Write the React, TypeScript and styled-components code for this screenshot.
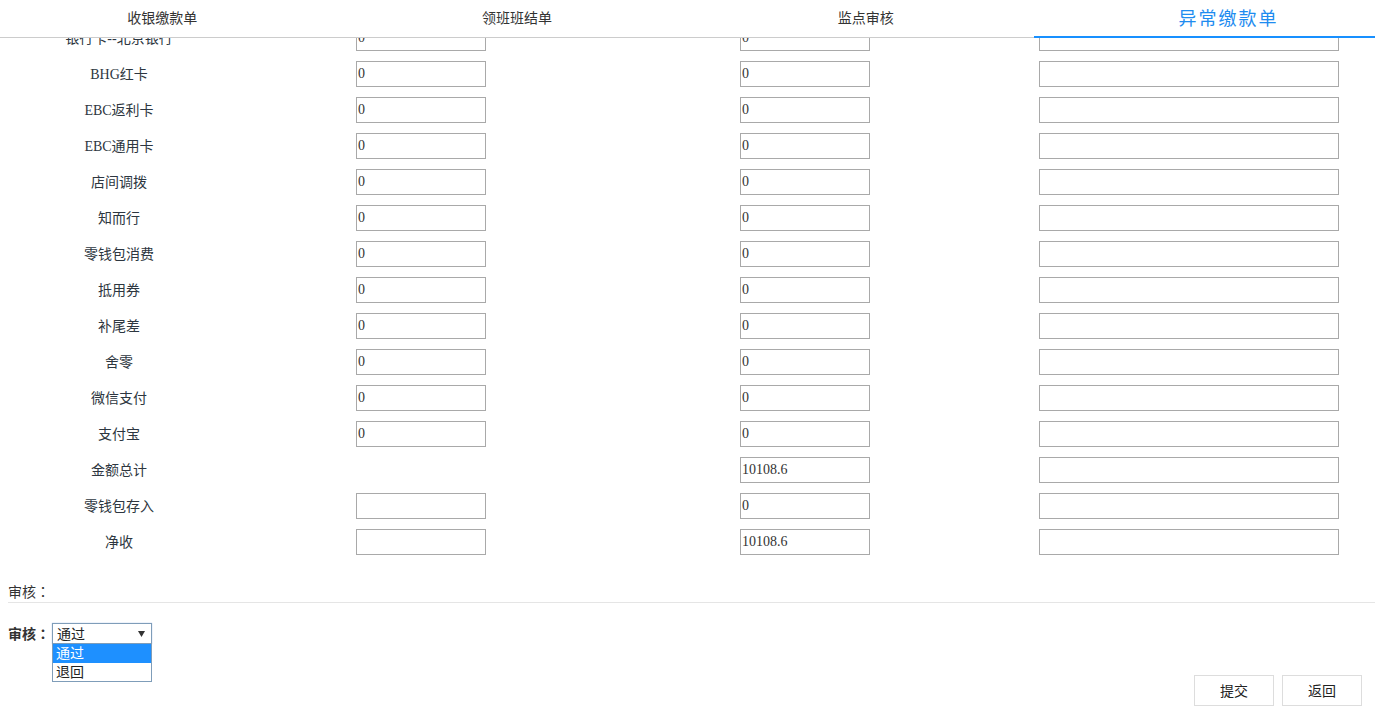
import { useState } from "react";
import styled, { createGlobalStyle } from "styled-components";

const GlobalStyle = createGlobalStyle`
  html, body {
    margin: 0;
    padding: 0;
    background: #fff;
    overflow: hidden;
  }
  body {
    font-family: "Liberation Serif", "Noto Sans CJK SC", serif;
    font-size: 14px;
    color: #333;
  }
`;

const TabBar = styled.div`
  position: fixed;
  top: 0;
  left: 0;
  right: 0;
  z-index: 10;
  display: grid;
  grid-template-columns: 1fr 1fr 1fr 341px;
  height: 38px;
  box-sizing: border-box;
  background: #fff;
  border-bottom: 1px solid #ccc;
`;

const Tab = styled.div<{ $active?: boolean }>`
  position: relative;
  display: flex;
  align-items: center;
  justify-content: center;
  font-family: "Noto Sans CJK SC", "Liberation Sans", sans-serif;
  font-size: ${(p) => (p.$active ? "18px" : "14px")};
  letter-spacing: ${(p) => (p.$active ? "2px" : "0")};
  color: ${(p) => (p.$active ? "#1e8cf0" : "#333")};
  cursor: pointer;

  &::after {
    content: "";
    display: ${(p) => (p.$active ? "block" : "none")};
    position: absolute;
    left: 0;
    right: 0;
    bottom: -1px;
    height: 2px;
    background: #1890ff;
  }
`;

const TabText = styled.span<{ $shift: number }>`
  margin-left: ${(p) => p.$shift * 2}px;
  margin-top: -3px;
`;

const Page = styled.div`
  padding-top: 20px;
`;

const Grid = styled.div`
  display: grid;
  grid-template-columns: 356px 384px 299px 1fr;
`;

const Row = styled.div`
  display: contents;
`;

const Cell = styled.div`
  height: 36px;
  display: flex;
  align-items: center;
`;

const LabelCell = styled(Cell)`
  justify-content: center;
  padding-right: 118px;
  padding-bottom: 2px;
  box-sizing: border-box;
  color: #2d3640;
`;

const Field = styled.input<{ $wide?: boolean }>`
  box-sizing: border-box;
  width: ${(p) => (p.$wide ? "300px" : "130px")};
  height: 26px;
  margin: 0;
  padding: 0 1px;
  border: 1px solid #a9a9a9;
  font-family: "Liberation Serif", serif;
  font-size: 14px;
  color: #333;
  background: #fff;
  outline: none;
`;

const SectionTitle = styled.div`
  margin: 21px 0 0 8px;
  height: 21px;
  line-height: 20px;
  border-bottom: 1px solid #e5e5e5;
  font-family: "Noto Sans CJK SC", sans-serif;
  font-size: 14px;
  color: #333;
`;

/* full-width colon centred in its box, as in the reference */
const Colon = styled.span`
  font-family: "Noto Sans CJK TC", "Noto Sans CJK SC", sans-serif;
`;

const ReviewRow = styled.div`
  margin-top: 20px;
  padding-left: 8px;
  display: flex;
  align-items: center;
  height: 21px;
`;

const ReviewLabel = styled.span`
  width: 44px;
  margin-top: -2px;
  font-family: "Noto Sans CJK SC", sans-serif;
  font-weight: bold;
  font-size: 14px;
  color: #333;
`;

const SelectWrap = styled.div`
  position: relative;
  width: 100px;
  height: 21px;
`;

const SelectBox = styled.div`
  box-sizing: border-box;
  height: 21px;
  border: 1px solid #7f9db9;
  box-shadow: 0 0 1px #9ab8e8;
  display: flex;
  align-items: center;
  justify-content: space-between;
  padding: 0 6px 2px 4px;
  font-family: "Noto Sans CJK SC", sans-serif;
  font-size: 14px;
  color: #222;
  background: #fff;
  cursor: pointer;

  svg {
    margin-top: 2px;
  }
`;

const OptionList = styled.div`
  position: absolute;
  top: 21px;
  left: 0;
  width: 100px;
  box-sizing: border-box;
  border: 1px solid #7f9db9;
  border-top: none;
  background: #fff;
  z-index: 5;
`;

const Option = styled.div<{ $selected?: boolean }>`
  height: 18.5px;
  line-height: 17px;
  padding-left: 3px;
  font-family: "Noto Sans CJK SC", sans-serif;
  font-size: 14px;
  background: ${(p) => (p.$selected ? "#1e90ff" : "#fff")};
  color: ${(p) => (p.$selected ? "#fff" : "#222")};
`;

const Actions = styled.div`
  margin-top: 31px;
  padding-right: 13px;
  display: flex;
  justify-content: flex-end;
  gap: 8px;
`;

const Button = styled.button`
  width: 80px;
  height: 31px;
  padding: 0 0 2px;
  border: 1px solid #ddd;
  background: #fff;
  font-family: "Noto Sans CJK SC", sans-serif;
  font-size: 14px;
  color: #222;
  cursor: pointer;
`;

type Item = { label: string; a: string | null; b: string; c: string };

const rows: Item[] = [
  { label: "银行卡--北京银行", a: "0", b: "0", c: "" },
  { label: "BHG红卡", a: "0", b: "0", c: "" },
  { label: "EBC返利卡", a: "0", b: "0", c: "" },
  { label: "EBC通用卡", a: "0", b: "0", c: "" },
  { label: "店间调拨", a: "0", b: "0", c: "" },
  { label: "知而行", a: "0", b: "0", c: "" },
  { label: "零钱包消费", a: "0", b: "0", c: "" },
  { label: "抵用券", a: "0", b: "0", c: "" },
  { label: "补尾差", a: "0", b: "0", c: "" },
  { label: "舍零", a: "0", b: "0", c: "" },
  { label: "微信支付", a: "0", b: "0", c: "" },
  { label: "支付宝", a: "0", b: "0", c: "" },
  { label: "金额总计", a: null, b: "10108.6", c: "" },
  { label: "零钱包存入", a: "", b: "0", c: "" },
  { label: "净收", a: "", b: "10108.6", c: "" },
];

const tabs = [
  { name: "收银缴款单", shift: -10 },
  { name: "领班班结单", shift: 0 },
  { name: "监点审核", shift: 4 },
  { name: "异常缴款单", shift: 24 },
];

export default function App() {
  const [active, setActive] = useState(3);
  const [choice, setChoice] = useState("通过");

  return (
    <>
      <GlobalStyle />
      <TabBar>
        {tabs.map((t, i) => (
          <Tab key={t.name} $active={i === active} onClick={() => setActive(i)}>
            <TabText $shift={t.shift}>{t.name}</TabText>
          </Tab>
        ))}
      </TabBar>
      <Page>
        <Grid>
          {rows.map((r) => (
            <Row key={r.label}>
              <LabelCell>{r.label}</LabelCell>
              <Cell>{r.a !== null && <Field defaultValue={r.a} />}</Cell>
              <Cell>
                <Field defaultValue={r.b} />
              </Cell>
              <Cell>
                <Field $wide defaultValue={r.c} />
              </Cell>
            </Row>
          ))}
        </Grid>

        <SectionTitle>
          审核<Colon>：</Colon>
        </SectionTitle>

        <ReviewRow>
          <ReviewLabel>
            审核<Colon>：</Colon>
          </ReviewLabel>
          <SelectWrap>
            <SelectBox>
              <span>{choice}</span>
              <svg width="7" height="6" viewBox="0 0 7 6">
                <path d="M0 0h7L3.5 6z" fill="#333" />
              </svg>
            </SelectBox>
            <OptionList>
              {["通过", "退回"].map((o) => (
                <Option key={o} $selected={o === "通过"} onClick={() => setChoice(o)}>
                  {o}
                </Option>
              ))}
            </OptionList>
          </SelectWrap>
        </ReviewRow>

        <Actions>
          <Button>提交</Button>
          <Button>返回</Button>
        </Actions>
      </Page>
    </>
  );
}
